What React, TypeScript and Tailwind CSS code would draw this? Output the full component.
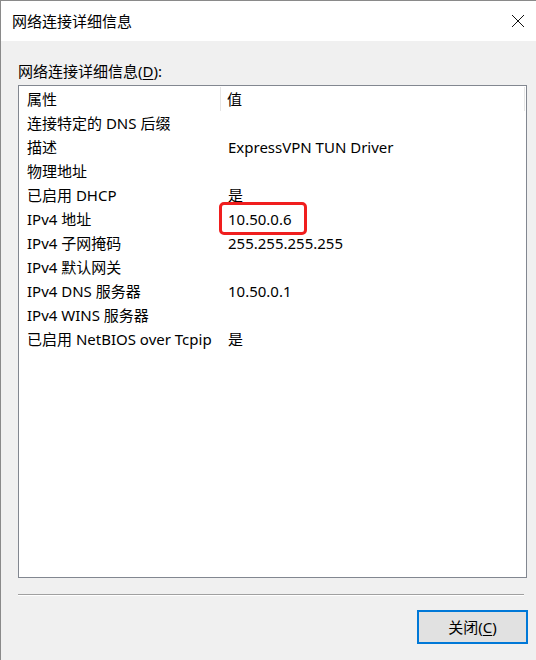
const font = { fontFamily: '"Noto Sans", "Noto Sans CJK SC", sans-serif' };

const rows: [string, string][] = [
  ["连接特定的 DNS 后缀", ""],
  ["描述", "ExpressVPN TUN Driver"],
  ["物理地址", ""],
  ["已启用 DHCP", "是"],
  ["IPv4 地址", "10.50.0.6"],
  ["IPv4 子网掩码", "255.255.255.255"],
  ["IPv4 默认网关", ""],
  ["IPv4 DNS 服务器", "10.50.0.1"],
  ["IPv4 WINS 服务器", ""],
  ["已启用 NetBIOS over Tcpip", "是"],
];

export default function App() {
  return (
    <div
      className="w-[536px] h-[660px] flex flex-col bg-[#f0f0f0] border-l border-t border-[#8a8a8a] text-[15px] text-black overflow-hidden"
      style={font}
    >
      {/* title bar */}
      <div className="h-[40px] bg-white flex items-center justify-between pl-[11px] pr-[8px] shrink-0">
        <span className="leading-none">网络连接详细信息</span>
        <svg width="14" height="14" viewBox="0 0 14 14" className="mr-[3px]">
          <path d="M1 1 L13 13 M13 1 L1 13" stroke="#111" strokeWidth="1" />
        </svg>
      </div>

      <div className="flex flex-col pl-[17px] pr-[8px] pt-[18px]">
        <div className="leading-[24px] h-[26px]">
          网络连接详细信息(<span className="underline underline-offset-2">D</span>):
        </div>

        <div className="h-[493px] w-[509px] bg-white border border-[#828790] flex flex-col pl-[7px] pt-[1px]">
          {/* header */}
          <div className="flex h-[24px] items-center">
            <div className="w-[195px] h-[24px] flex items-center border-r border-[#e5e5e5] pl-[1px]">属性</div>
            <div className="flex-1 h-[24px] flex items-center pl-[6px] border-r border-[#e5e5e5] mr-[1px]">值</div>
          </div>
          {rows.map(([k, v]) => (
            <div key={k} className="flex h-[24px] items-center">
              <div className="w-[196px] pl-[1px] whitespace-nowrap">{k}</div>
              <div className="flex-1 pl-[6px]">
                {v === "10.50.0.6" ? (
                  <span className="relative">
                    {v}
                    <span className="absolute left-[-9px] w-[88px] top-[-7px] bottom-[-6px] border-[3px] border-[#f01e1e] rounded-[5px]" />
                  </span>
                ) : (
                  v
                )}
              </div>
            </div>
          ))}
        </div>

        <div className="mt-[16px] h-[2px] w-[506px] bg-[#a0a0a0] border-b border-white" />

        <div className="flex justify-end mt-[14px] pr-[0px]">
          <button className="w-[111px] h-[34px] border-2 border-[#0078d7] bg-[#e1e1e1] flex items-center justify-center">
            关闭(<span className="underline underline-offset-2">C</span>)
          </button>
        </div>
      </div>
    </div>
  );
}
